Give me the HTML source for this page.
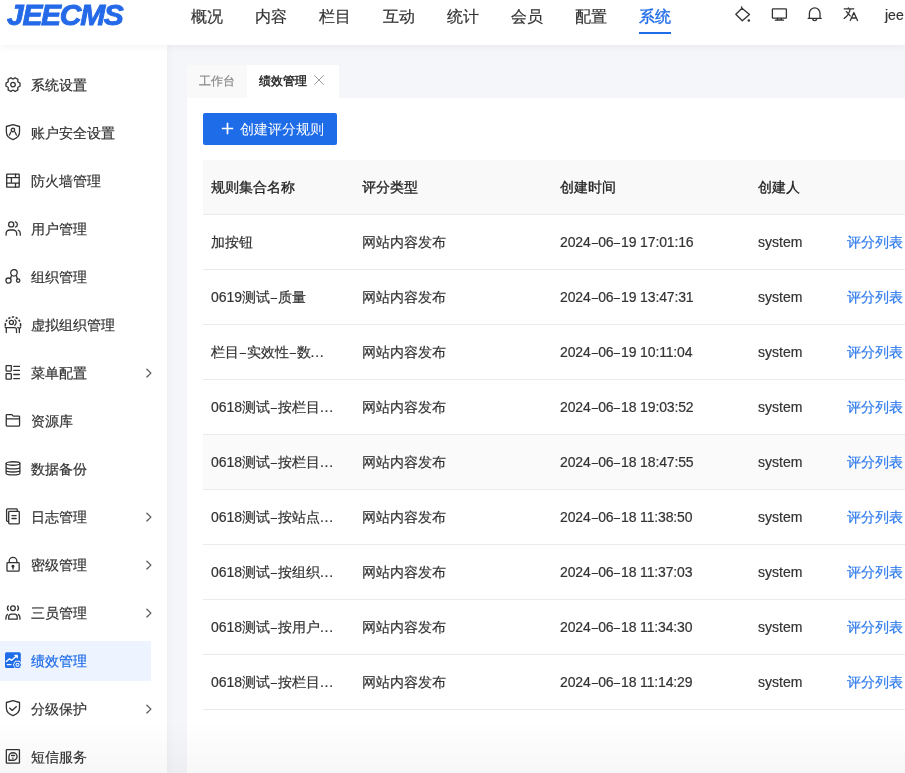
<!DOCTYPE html>
<html><head><meta charset="utf-8">
<style>
*{box-sizing:border-box;margin:0;padding:0}
html,body{width:905px;height:773px;overflow:hidden}
body{position:relative;background:#f5f6f9;font-family:"Liberation Sans",sans-serif;color:#333;font-size:14px;-webkit-text-stroke-width:0.2px}
.hdr{position:absolute;left:0;top:0;width:905px;height:45px;background:#fff;z-index:3;box-shadow:0 2px 8px rgba(0,0,0,0.05)}
.logo{position:absolute;left:7px;top:-2px;font:italic bold 30px/34px "Liberation Sans",sans-serif;color:#2469e8;letter-spacing:-1.3px;-webkit-text-stroke:0.9px #2469e8}
.nav{position:absolute;top:6px;font-size:16px;line-height:22px;color:#333}
.nav.on{color:#1f6ce8;-webkit-text-stroke-width:0.35px}
.uline{position:absolute;left:639px;top:32px;width:32px;height:2px;background:#1f6ce8}
.ticon{position:absolute;top:6px}
.side{position:absolute;left:0;top:45px;width:167px;height:728px;background:#fff;z-index:2;box-shadow:2px 0 8px rgba(0,0,0,0.03)}
.it{position:absolute;left:0;width:151px;height:40px}
.it.on{background:#edf4ff}
.it svg{position:absolute;left:5px;top:12px}
.it span{position:absolute;left:31px;top:11px;line-height:18px;font-size:14px;color:#333}
.it.on span{color:#1f6ce8}
.it .chev{position:absolute;left:146px;top:15px}
.card{position:absolute;left:187px;top:98px;width:718px;height:675px;background:#fff}
.tabs{position:absolute;left:187px;top:65px;height:32px}
.tab0{position:absolute;left:187px;top:65px;width:60px;height:33px;background:#f9f9fa}
.tab1{position:absolute;left:247px;top:65px;width:92px;height:33px;background:#fff}
.tabtxt{position:absolute;top:73px;font-size:12px;line-height:17px}
.btn{position:absolute;left:203px;top:113px;width:134px;height:32px;background:#1f6ce8;border-radius:2px;box-shadow:0 2px 0 rgba(0,0,0,0.016);color:#fff;font-size:14px;-webkit-text-stroke-width:0}
.thd{position:absolute;left:203px;top:160px;width:702px;height:54px;background:#f9f9f9}
.line{position:absolute;left:203px;width:702px;height:1px;background:#ebebeb}
.c{position:absolute;line-height:18px;font-size:14px;color:#333;white-space:nowrap}
.h{color:#222;-webkit-text-stroke-width:0.3px}
.lk{color:#2f7bed}
.dsh{font-style:normal;display:inline-block;transform:scaleX(0.8)}
.dots{font-style:normal;letter-spacing:0.7px}
.dt{letter-spacing:-0.15px}
.fade{position:absolute;left:0;top:722px;width:905px;height:51px;background:linear-gradient(rgba(0,0,0,0),rgba(0,0,0,0.03));z-index:5;pointer-events:none}
</style></head><body><div id="root" style="position:absolute;left:0;top:0;width:905px;height:773px;will-change:transform">
<div class="hdr">
  <div class="logo">JEECMS</div>
  <div class="nav" style="left:191px">概况</div>
  <div class="nav" style="left:255px">内容</div>
  <div class="nav" style="left:319px">栏目</div>
  <div class="nav" style="left:383px">互动</div>
  <div class="nav" style="left:447px">统计</div>
  <div class="nav" style="left:511px">会员</div>
  <div class="nav" style="left:575px">配置</div>
  <div class="nav on" style="left:639px">系统</div>
  <div class="uline"></div>
  <svg class="ticon" style="left:733px;top:4px" width="20" height="20" viewBox="0 0 20 20" fill="none" stroke="#333" stroke-width="1.3" stroke-linejoin="round"><path d="M9 4.2L2.8 10.3 9.3 16.8 16.5 10.5z M8.4 2.4L9 4.2"/><circle cx="15.8" cy="16.4" r="1.25" fill="#333" stroke="none"/></svg>
  <svg class="ticon" style="left:769px;top:4px" width="20" height="20" viewBox="0 0 20 20" fill="none" stroke="#333" stroke-width="1.3" stroke-linejoin="round"><rect x="3.4" y="4.8" width="14" height="9.4" rx="0.6"/><path d="M8.6 14.4l-0.5 1.6h4.6l-0.5-1.6M6.3 16.2h8.2" stroke-linecap="round"/></svg>
  <svg class="ticon" style="left:805px;top:4px" width="20" height="20" viewBox="0 0 20 20" fill="none" stroke="#333" stroke-width="1.3" stroke-linejoin="round" stroke-linecap="round"><path d="M4.4 14.3V9.2a5.3 5.3 0 0 1 10.6 0v5.1M3.2 14.4h13M7.7 14.6a2 2 0 0 0 4 0"/></svg>
  <svg class="ticon" style="left:841px;top:4px" width="20" height="20" viewBox="0 0 20 20" fill="none" stroke="#333" stroke-width="1.3" stroke-linejoin="round" stroke-linecap="round"><path d="M3.2 4.8h9.6M7.4 3.8v1M9.3 4.8C8.2 9.5 6 12.6 3.2 14.4M5.4 7.6l3.8 4.3M9.3 16.5l3.6-8 3.6 8M10.4 14h5"/></svg>
  <div style="position:absolute;left:885px;top:6px;font-size:14px;line-height:18px;color:#333">jee</div>
</div>
<div class="side">
<div class="it" style="top:20px"><svg width="16" height="16" viewBox="0 0 16 16" fill="none" stroke="#333" stroke-width="1.3" stroke-linecap="round" stroke-linejoin="round"><path d="M13.21 5.17 L15.02 5.98 L15.02 9.22 L13.21 10.03 L12.71 10.90 L12.91 12.87 L10.11 14.49 L8.50 13.33 L7.50 13.33 L5.89 14.49 L3.09 12.87 L3.29 10.90 L2.79 10.03 L0.98 9.22 L0.98 5.98 L2.79 5.17 L3.29 4.30 L3.09 2.33 L5.89 0.71 L7.50 1.87 L8.50 1.87 L10.11 0.71 L12.91 2.33 L12.71 4.30z"/><circle cx="8" cy="7.6" r="2.3"/></svg><span>系统设置</span></div>
<div class="it" style="top:68px"><svg width="16" height="17" viewBox="0 0 16 17" style="top:11px" fill="none" stroke="#333" stroke-width="1.3" stroke-linecap="round" stroke-linejoin="round"><path d="M7.96 0.7L1.4 2.5V8.3C1.4 11.7 4.3 14.4 7.96 15.6 11.6 14.4 14.5 11.7 14.5 8.3V2.5z"/><circle cx="7.96" cy="6" r="1.75"/><path d="M5.8 8.2L4.5 11.1M10.1 8.2l1.3 2.9"/></svg><span>账户安全设置</span></div>
<div class="it" style="top:116px"><svg width="16" height="16" viewBox="0 0 16 16" fill="none" stroke="#333" stroke-width="1.3" stroke-linecap="round" stroke-linejoin="round"><rect x="1.7" y="1.1" width="12.5" height="13" rx="0.3"/><path d="M1.7 4.6h12.5M1.7 10.1h12.5M10.5 1.1v3.5M6.4 4.6v5.5M10.5 10.1v4"/></svg><span>防火墙管理</span></div>
<div class="it" style="top:164px"><svg width="16" height="16" viewBox="0 0 16 16" fill="none" stroke="#333" stroke-width="1.3" stroke-linecap="round" stroke-linejoin="round"><circle cx="6.2" cy="3.4" r="2.55"/><path d="M10.4 0.8a2.9 2.75 0 0 1 0 5.2M1.1 14.2V12.6c0-2 1.6-3.6 3.6-3.6h3.4c2 0 3.6 1.6 3.6 3.6v1.6M13.2 9.2c1.3 0.5 2.1 1.7 2.1 3.2v1.8"/></svg><span>用户管理</span></div>
<div class="it" style="top:212px"><svg width="16" height="16" viewBox="0 0 16 16" fill="none" stroke="#333" stroke-width="1.3" stroke-linecap="round" stroke-linejoin="round"><circle cx="8.95" cy="3.8" r="3.25"/><circle cx="3.5" cy="11.6" r="2.6"/><circle cx="13.15" cy="11.6" r="1.7"/><path d="M6.6 6.3l-1 2.9M11.2 6.3l1.2 3.7"/></svg><span>组织管理</span></div>
<div class="it" style="top:260px"><svg width="18" height="18" viewBox="0 0 18 18" style="left:4px;top:11px" fill="none" stroke="#333" stroke-width="1.3" stroke-linecap="round" stroke-linejoin="round"><path d="M1.3 10.6V9A7.65 8 0 0 1 16.6 9V10.6" stroke-dasharray="3.6 1.5 2.3 1.5 2.3 1.5 2.3 1.5 2.3 1.5 2.3 1.5 3.6" stroke-width="1.55" stroke-linecap="butt"/><circle cx="7.4" cy="6.4" r="2.05"/><path d="M10.8 3.9Q13.6 6.55 10.8 9.2M1.3 11.4l1 0.8v4.4M2.3 11.6h8.2c1.2 0 2 0.8 2 2v3M15.36 12.4v4.2M13.8 11.5l1.56 0.9 1.24-0.9"/></svg><span>虚拟组织管理</span></div>
<div class="it" style="top:308px"><svg width="16" height="16" viewBox="0 0 16 16" fill="none" stroke="#333" stroke-width="1.3" stroke-linecap="round" stroke-linejoin="round"><rect x="1.1" y="0.5" width="5.2" height="5.55" rx="0.5"/><rect x="1.1" y="8.7" width="5.2" height="5.5" rx="0.5"/><path d="M8.8 1.4h5.6M8.8 5.4h5.6M8.8 9.5h5.6M8.8 13.6h5.6" stroke-width="1.4"/></svg><span>菜单配置</span><svg class="chev" width="6" height="10" viewBox="0 0 6 10" fill="none" stroke="#5c5c5c" stroke-width="1.3" stroke-linecap="round" stroke-linejoin="round"><path d="M0.9 1.2L4.9 5.1 0.9 9"/></svg></div>
<div class="it" style="top:356px"><svg width="16" height="16" viewBox="0 0 16 16" fill="none" stroke="#333" stroke-width="1.3" stroke-linecap="round" stroke-linejoin="round"><path d="M1.25 2.3c0-0.4 0.3-0.75 0.75-0.75H6.7L8.3 3.1h5.5c0.4 0 0.75 0.35 0.75 0.75v8.45c0 0.4-0.35 0.75-0.75 0.75H2c-0.4 0-0.75-0.35-0.75-0.75zM1.25 5.9h13.3"/></svg><span>资源库</span></div>
<div class="it" style="top:404px"><svg width="16" height="16" viewBox="0 0 16 16" fill="none" stroke="#333" stroke-width="1.3" stroke-linecap="round" stroke-linejoin="round"><ellipse cx="8" cy="2.5" rx="6.9" ry="1.75"/><path d="M1.1 2.5v9.7c0 1 3.1 1.75 6.9 1.75s6.9-0.75 6.9-1.75V2.5M1.1 6.15c0 1 3.1 1.75 6.9 1.75s6.9-0.75 6.9-1.75M1.1 9.25c0 1 3.1 1.75 6.9 1.75s6.9-0.75 6.9-1.75"/></svg><span>数据备份</span></div>
<div class="it" style="top:452px"><svg width="16" height="17" viewBox="0 0 16 17" style="top:11px" fill="none" stroke="#333" stroke-width="1.3" stroke-linecap="round" stroke-linejoin="round"><path d="M3.7 13.35H2.4c-0.45 0-0.8-0.35-0.8-0.8V1.75c0-0.45 0.35-0.8 0.8-0.8h9.05c0.45 0 0.8 0.35 0.8 0.8V3.45"/><rect x="3.7" y="3.45" width="10.6" height="12.4" rx="0.8"/><path d="M6.95 7.6h4.2M6.95 10.5h4.2" stroke-width="1.4"/></svg><span>日志管理</span><svg class="chev" width="6" height="10" viewBox="0 0 6 10" fill="none" stroke="#5c5c5c" stroke-width="1.3" stroke-linecap="round" stroke-linejoin="round"><path d="M0.9 1.2L4.9 5.1 0.9 9"/></svg></div>
<div class="it" style="top:500px"><svg width="16" height="17" viewBox="0 0 16 17" style="top:11px" fill="none" stroke="#333" stroke-width="1.3" stroke-linecap="round" stroke-linejoin="round"><path d="M4.2 6.5V5.1a3.8 3.8 0 0 1 7.65 0v1.4"/><rect x="2" y="6.55" width="12.15" height="8.65" rx="0.8"/><circle cx="7.96" cy="10.2" r="1.45" fill="#333" stroke="none"/><path d="M7.1 10.7h1.75l-0.45 3h-0.85z" fill="#333" stroke="none"/></svg><span>密级管理</span><svg class="chev" width="6" height="10" viewBox="0 0 6 10" fill="none" stroke="#5c5c5c" stroke-width="1.3" stroke-linecap="round" stroke-linejoin="round"><path d="M0.9 1.2L4.9 5.1 0.9 9"/></svg></div>
<div class="it" style="top:548px"><svg width="16" height="17" viewBox="0 0 16 17" style="top:11px" fill="none" stroke="#333" stroke-width="1.3" stroke-linecap="round" stroke-linejoin="round"><circle cx="7.96" cy="4.2" r="2.35"/><path d="M3.3 1.9Q1.5 4.1 3.3 6.4M12.6 1.9Q14.4 4.1 12.6 6.4M3.7 15.2v-2.3c0-1.6 1.25-2.85 2.85-2.85h2.8c1.6 0 2.85 1.25 2.85 2.85v2.3zM2.4 10.5Q0.95 11.9 0.95 13.7v1.5M13.5 10.5Q14.95 11.9 14.95 13.7v1.5"/></svg><span>三员管理</span><svg class="chev" width="6" height="10" viewBox="0 0 6 10" fill="none" stroke="#5c5c5c" stroke-width="1.3" stroke-linecap="round" stroke-linejoin="round"><path d="M0.9 1.2L4.9 5.1 0.9 9"/></svg></div>
<div class="it on" style="top:596px"><svg width="16" height="17" viewBox="0 0 16 17" style="top:11px"><rect x="0" y="0.2" width="15.8" height="15.9" rx="1.6" fill="#1f6ce8"/><path d="M1.4 9.6L4.5 6.8 6.7 8.3 12 3.6M9.9 3.4h2.3v2.3" fill="none" stroke="#fff" stroke-width="1.4" stroke-linecap="round" stroke-linejoin="round"/><path d="M2.3 12.6h3.7" stroke="#fff" stroke-width="1.4" stroke-linecap="round"/><path d="M17.10 12.80 L14.80 16.78 L10.20 16.78 L7.90 12.80 L10.20 8.82 L14.80 8.82z" fill="#edf4ff"/><path d="M15.40 12.80 L13.95 15.31 L11.05 15.31 L9.60 12.80 L11.05 10.29 L13.95 10.29z" fill="#fff" stroke="#1f6ce8" stroke-width="1.3" stroke-linejoin="round"/><circle cx="12.5" cy="12.8" r="1" fill="#1f6ce8"/></svg><span>绩效管理</span></div>
<div class="it" style="top:644px"><svg width="16" height="17" viewBox="0 0 16 17" style="top:11px" fill="none" stroke="#333" stroke-width="1.3" stroke-linecap="round" stroke-linejoin="round"><path d="M7.96 0.7L1.4 2.5V8.3C1.4 11.7 4.3 14.4 7.96 15.6 11.6 14.4 14.5 11.7 14.5 8.3V2.5z"/><path d="M4.6 8.1l2.6 2.3 4.2-3.8"/></svg><span>分级保护</span><svg class="chev" width="6" height="10" viewBox="0 0 6 10" fill="none" stroke="#5c5c5c" stroke-width="1.3" stroke-linecap="round" stroke-linejoin="round"><path d="M0.9 1.2L4.9 5.1 0.9 9"/></svg></div>
<div class="it" style="top:692px"><svg width="16" height="17" viewBox="0 0 16 17" style="top:11px" fill="none" stroke="#333" stroke-width="1.3" stroke-linecap="round" stroke-linejoin="round"><rect x="1.35" y="1.65" width="13.1" height="13.55" rx="0.6"/><path d="M3.95 12.25V8.5A4.05 3.75 0 1 1 8 12.25z"/><path d="M6.6 7.5h2.8" stroke-width="1.5"/><path d="M7.5 10.1h0.7" stroke-width="1.2"/></svg><span>短信服务</span></div>
</div>
<div class="tab0"></div>
<div class="tab1"></div>
<div class="tabtxt" style="left:199px;color:#888">工作台</div>
<div class="tabtxt" style="left:259px;top:73px;color:#222;-webkit-text-stroke-width:0.4px">绩效管理</div>
<svg style="position:absolute;left:313px;top:74px" width="12" height="12" viewBox="0 0 12 12" stroke="#999" stroke-width="1" stroke-linecap="round"><path d="M1.5 1.5l9 9M10.5 1.5l-9 9"/></svg>
<div class="card"></div>
<div class="btn"><svg style="position:absolute;left:18px;top:8.5px" width="13" height="13" viewBox="0 0 13 13" stroke="#fff" stroke-width="1.7"><path d="M6.5 0.8v11.4M0.8 6.5h11.4"/></svg><span style="position:absolute;left:37px;top:7px;line-height:18px">创建评分规则</span></div>
<div class="thd"></div>
<div class="c h" style="left:211px;top:178px">规则集合名称</div>
<div class="c h" style="left:362px;top:178px">评分类型</div>
<div class="c h" style="left:560px;top:178px">创建时间</div>
<div class="c h" style="left:758px;top:178px">创建人</div>
<div class="line" style="top:214px"></div>
<div class="c" style="left:211px;top:233px">加按钮</div>
<div class="c" style="left:362px;top:233px">网站内容发布</div>
<div class="c dt" style="left:560px;top:233px">2024<i class="dsh">–</i>06<i class="dsh">–</i>19 17:01:16</div>
<div class="c" style="left:758px;top:233px">system</div>
<div class="c lk" style="left:847px;top:233px">评分列表</div>
<div class="line" style="top:269px"></div>
<div class="c" style="left:211px;top:288px">0619测试<i class="dsh">–</i>质量</div>
<div class="c" style="left:362px;top:288px">网站内容发布</div>
<div class="c dt" style="left:560px;top:288px">2024<i class="dsh">–</i>06<i class="dsh">–</i>19 13:47:31</div>
<div class="c" style="left:758px;top:288px">system</div>
<div class="c lk" style="left:847px;top:288px">评分列表</div>
<div class="line" style="top:324px"></div>
<div class="c" style="left:211px;top:343px">栏目<i class="dsh">–</i>实效性<i class="dsh">–</i>数<i class="dots">...</i></div>
<div class="c" style="left:362px;top:343px">网站内容发布</div>
<div class="c dt" style="left:560px;top:343px">2024<i class="dsh">–</i>06<i class="dsh">–</i>19 10:11:04</div>
<div class="c" style="left:758px;top:343px">system</div>
<div class="c lk" style="left:847px;top:343px">评分列表</div>
<div class="line" style="top:379px"></div>
<div class="c" style="left:211px;top:398px">0618测试<i class="dsh">–</i>按栏目<i class="dots">...</i></div>
<div class="c" style="left:362px;top:398px">网站内容发布</div>
<div class="c dt" style="left:560px;top:398px">2024<i class="dsh">–</i>06<i class="dsh">–</i>18 19:03:52</div>
<div class="c" style="left:758px;top:398px">system</div>
<div class="c lk" style="left:847px;top:398px">评分列表</div>
<div class="line" style="top:434px"></div>
<div style="position:absolute;left:203px;top:435px;width:702px;height:54px;background:#fafafa"></div>
<div class="c" style="left:211px;top:453px">0618测试<i class="dsh">–</i>按栏目<i class="dots">...</i></div>
<div class="c" style="left:362px;top:453px">网站内容发布</div>
<div class="c dt" style="left:560px;top:453px">2024<i class="dsh">–</i>06<i class="dsh">–</i>18 18:47:55</div>
<div class="c" style="left:758px;top:453px">system</div>
<div class="c lk" style="left:847px;top:453px">评分列表</div>
<div class="line" style="top:489px"></div>
<div class="c" style="left:211px;top:508px">0618测试<i class="dsh">–</i>按站点<i class="dots">...</i></div>
<div class="c" style="left:362px;top:508px">网站内容发布</div>
<div class="c dt" style="left:560px;top:508px">2024<i class="dsh">–</i>06<i class="dsh">–</i>18 11:38:50</div>
<div class="c" style="left:758px;top:508px">system</div>
<div class="c lk" style="left:847px;top:508px">评分列表</div>
<div class="line" style="top:544px"></div>
<div class="c" style="left:211px;top:563px">0618测试<i class="dsh">–</i>按组织<i class="dots">...</i></div>
<div class="c" style="left:362px;top:563px">网站内容发布</div>
<div class="c dt" style="left:560px;top:563px">2024<i class="dsh">–</i>06<i class="dsh">–</i>18 11:37:03</div>
<div class="c" style="left:758px;top:563px">system</div>
<div class="c lk" style="left:847px;top:563px">评分列表</div>
<div class="line" style="top:599px"></div>
<div class="c" style="left:211px;top:618px">0618测试<i class="dsh">–</i>按用户<i class="dots">...</i></div>
<div class="c" style="left:362px;top:618px">网站内容发布</div>
<div class="c dt" style="left:560px;top:618px">2024<i class="dsh">–</i>06<i class="dsh">–</i>18 11:34:30</div>
<div class="c" style="left:758px;top:618px">system</div>
<div class="c lk" style="left:847px;top:618px">评分列表</div>
<div class="line" style="top:654px"></div>
<div class="c" style="left:211px;top:673px">0618测试<i class="dsh">–</i>按栏目<i class="dots">...</i></div>
<div class="c" style="left:362px;top:673px">网站内容发布</div>
<div class="c dt" style="left:560px;top:673px">2024<i class="dsh">–</i>06<i class="dsh">–</i>18 11:14:29</div>
<div class="c" style="left:758px;top:673px">system</div>
<div class="c lk" style="left:847px;top:673px">评分列表</div>
<div class="line" style="top:709px"></div>
<div class="fade"></div>
</div></body></html>
